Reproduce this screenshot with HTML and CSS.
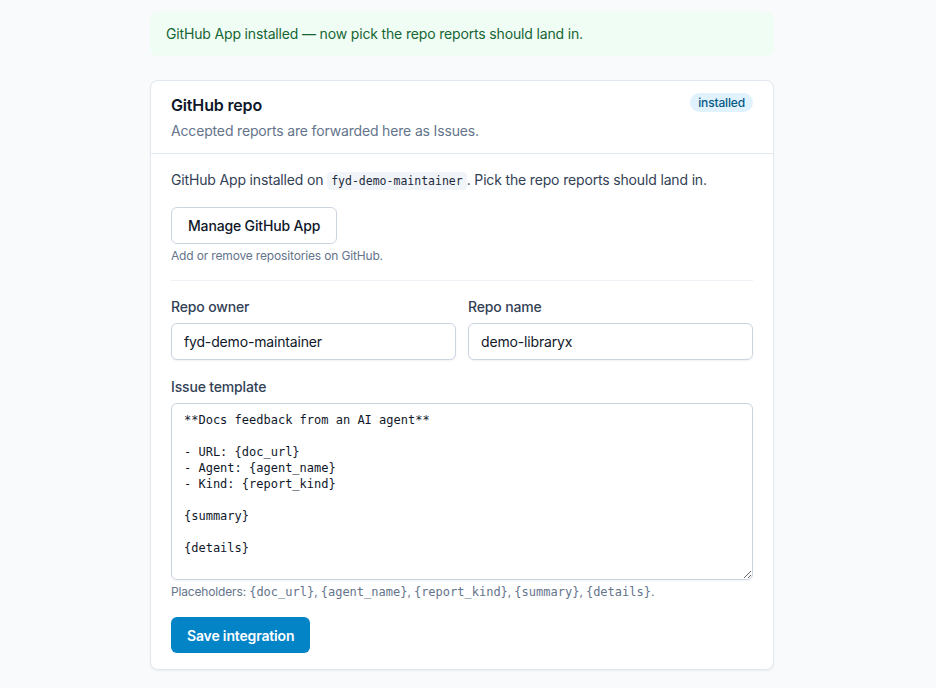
FILE: index.html
```
<!DOCTYPE html>
<html lang="en">
<head>
    <meta charset="UTF-8">
    <meta name="viewport" content="width=device-width, initial-scale=1.0">
    <title>GitHub integration</title>
    <link rel="stylesheet" href="styles.css">
</head>
<body>
    <div class="page">
        <div class="notice">GitHub App installed — now pick the repo reports should land in.</div>

        <div class="card">
            <div class="card-header">
                <div>
                    <h2>GitHub repo</h2>
                    <p class="subtitle">Accepted reports are forwarded here as Issues.</p>
                </div>
                <span class="badge">installed</span>
            </div>

            <div class="card-body">
                <p class="intro">GitHub App installed on <code class="chip">fyd-demo-maintainer</code>. Pick the repo reports should land in.</p>
                <button class="btn-secondary" type="button">Manage GitHub App</button>
                <p class="hint">Add or remove repositories on GitHub.</p>

                <hr class="divider">

                <div class="field-row">
                    <label class="field">
                        <span class="label">Repo owner</span>
                        <input type="text" value="fyd-demo-maintainer">
                    </label>
                    <label class="field">
                        <span class="label">Repo name</span>
                        <input type="text" value="demo-libraryx">
                    </label>
                </div>

                <label class="field template-field">
                    <span class="label">Issue template</span>
                    <textarea rows="10">**Docs feedback from an AI agent**

- URL: {doc_url}
- Agent: {agent_name}
- Kind: {report_kind}

{summary}

{details}</textarea>
                </label>
                <p class="hint">Placeholders: <code>{doc_url}</code>, <code>{agent_name}</code>, <code>{report_kind}</code>, <code>{summary}</code>, <code>{details}</code>.</p>

                <button class="btn-primary" type="button">Save integration</button>
            </div>
        </div>
    </div>
</body>
</html>
```

FILE: styles.css
```
body {
    margin: 0;
    padding: 12px 12px 20px 0;
    background-color: #f8fafc;
    font-family: Inter, "Liberation Sans", Arial, sans-serif;
    letter-spacing: -0.01em;
    color: #1e293b;
}
.page {
    width: 624px;
    margin: 0 auto;
}
.notice {
    background-color: #f0fdf4;
    color: #166534;
    font-size: 14px;
    line-height: 20px;
    padding: 12px 16px;
    border-radius: 8px;
    margin-bottom: 24px;
}
.card {
    background: white;
    border: 1px solid #e2e8f0;
    border-radius: 8px;
    box-shadow: 0 1px 2px rgba(15, 23, 42, 0.06);
}
.card-header {
    display: flex;
    justify-content: space-between;
    align-items: flex-start;
    padding: 12px 20px;
    border-bottom: 1px solid #e2e8f0;
}
.card-header h2 {
    margin: 0;
    font-size: 16px;
    line-height: 24px;
    font-weight: 600;
    color: #0f172a;
}
.subtitle {
    margin: 4px 0 0;
    font-size: 14px;
    line-height: 20px;
    color: #64748b;
}
.badge {
    background-color: #e0f2fe;
    color: #075985;
    font-size: 12px;
    line-height: 19px;
    padding: 0 8px;
    border-radius: 999px;
    font-weight: 500;
}
.card-body {
    padding: 16px 20px 16px;
}
.intro {
    margin: 0;
    font-size: 14px;
    line-height: 20px;
    color: #334155;
}
code {
    font-family: "DejaVu Sans Mono", "Liberation Mono", monospace;
    font-size: 12px;
    letter-spacing: 0;
}
.chip {
    background-color: #f1f5f9;
    font-size: 11.5px;
    padding: 2px 4px;
    border-radius: 4px;
    color: #1e293b;
}
.btn-secondary {
    display: block;
    margin-top: 16px;
    height: 37px;
    padding: 0 16px;
    background: white;
    border: 1px solid #cbd5e1;
    border-radius: 6px;
    font-family: inherit;
    font-size: 14px;
    font-weight: 500;
    letter-spacing: inherit;
    color: #0f172a;
    cursor: pointer;
}
.hint {
    margin: 4px 0 0;
    font-size: 12px;
    line-height: 16px;
    color: #64748b;
}
.divider {
    border: none;
    border-top: 1px solid #edf1f5;
    margin: 16px 0;
}
.field-row {
    display: grid;
    grid-template-columns: 1fr 1fr;
    gap: 12px;
}
.field {
    display: flex;
    flex-direction: column;
}
.label {
    font-size: 14px;
    line-height: 20px;
    font-weight: 500;
    color: #334155;
    margin-bottom: 6px;
}
input {
    height: 37px;
    box-sizing: border-box;
    padding: 0 12px;
    border: 1px solid #cbd5e1;
    border-radius: 6px;
    font-family: inherit;
    font-size: 14px;
    letter-spacing: inherit;
    color: #0f172a;
    box-shadow: 0 1px 2px rgba(15, 23, 42, 0.05);
}
.template-field {
    margin-top: 17px;
}
textarea {
    box-sizing: border-box;
    height: 177px;
    padding: 8px 12px;
    border: 1px solid #cbd5e1;
    border-radius: 6px;
    font-family: "DejaVu Sans Mono", "Liberation Mono", monospace;
    font-size: 12px;
    line-height: 16px;
    color: #0f172a;
    box-shadow: 0 1px 2px rgba(15, 23, 42, 0.05);
    resize: vertical;
}
.btn-primary {
    display: block;
    margin-top: 17px;
    height: 36px;
    padding: 0 16px;
    background-color: #0284c7;
    color: white;
    border: none;
    border-radius: 6px;
    font-family: inherit;
    font-size: 14px;
    font-weight: 600;
    letter-spacing: inherit;
    cursor: pointer;
}
```
